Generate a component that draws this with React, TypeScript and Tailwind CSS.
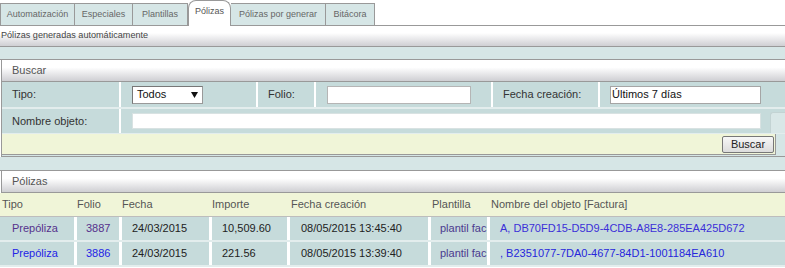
import clsx from 'clsx';

const tabs = [
  { label: 'Automatización', w: 'w-[75px]' },
  { label: 'Especiales', w: 'w-[58px]' },
  { label: 'Plantillas', w: 'w-[55px]' },
  { label: 'Pólizas', w: 'w-[43px]', active: true },
  { label: 'Pólizas por generar', w: 'w-[95px]' },
  { label: 'Bitácora', w: 'w-[49px]' },
];

const columns = [
  { title: 'Tipo', w: 'w-[77px]', head: 'pl-[2px]', cell: 'pl-[12px]' },
  { title: 'Folio', w: 'w-[45px]', head: 'pl-0', cell: 'pl-[9px]' },
  { title: 'Fecha', w: 'w-[90px]', head: 'pl-0', cell: 'pl-[10px]' },
  { title: 'Importe', w: 'w-[78px]', head: 'pl-0', cell: 'pl-[10px]' },
  { title: 'Fecha creación', w: 'w-[141px]', head: 'pl-px', cell: 'pl-[11px]' },
  { title: 'Plantilla', w: 'w-[59px]', head: 'pl-px', cell: 'pl-[9px]' },
  { title: 'Nombre del objeto [Factura]', w: 'flex-1', head: 'pl-px', cell: 'pl-[10px]' },
];

const rows = [
  {
    visited: true,
    values: ['Prepóliza', '3887', '24/03/2015', '10,509.60', '08/05/2015 13:45:40', 'plantil fac', 'A, DB70FD15-D5D9-4CDB-A8E8-285EA425D672'],
  },
  {
    visited: false,
    values: ['Prepóliza', '3886', '24/03/2015', '221.56', '08/05/2015 13:39:40', 'plantil fac', ', B2351077-7DA0-4677-84D1-1001184EA610'],
  },
];

const linkColor = (col: number, visited: boolean) => {
  if (col === 0 || col === 1) return visited ? 'text-[#55318c]' : 'text-[#2323e6]';
  if (col === 5) return 'text-[#4b3a8e]';
  if (col === 6) return visited ? 'text-[#3b2fd8]' : 'text-[#2626dc]';
  return 'text-[#222]';
};

const PanelHeader = ({ title }: { title: string }) => (
  <div className="h-[22px] flex items-center pl-[10px] border-b border-[#999] bg-linear-to-b from-white from-35% to-[#cfcfd3] text-[#555]">
    {title}
  </div>
);

export default function App() {
  return (
    <div className="w-[785px] h-[268px] overflow-hidden bg-white font-[Liberation_Sans,Arial,sans-serif] text-[11px] text-[#333]">
      {/* Tabs */}
      <div className="flex items-end h-[26px] border-b border-[#999]">
        {tabs.map((tab, i) => (
          <div
            key={tab.label}
            className={clsx(
              'flex items-center justify-center text-[9px] border-t border-r border-[#999]',
              tab.w,
              i === 0 && 'border-l',
              tab.active
                ? 'h-[26px] -mb-px bg-white rounded-t-[8px] border-l text-[#555] pb-[3px]'
                : 'h-[22px] bg-[#d6e6e6] text-[#666]'
            )}
          >
            {tab.label}
          </div>
        ))}
      </div>

      {/* Subtitle */}
      <div className="h-[21px] flex items-center pl-px border-b border-[#999] bg-linear-to-b from-white from-35% to-[#cfcfd3] text-[9.1px] text-[#444]">
        Pólizas generadas automáticamente
      </div>
      <div className="h-[13px] bg-[#d6e6e6] border-b border-[#999]" />

      {/* Buscar panel */}
      <div className="ml-px border-l border-[#999] bg-[#d6e6e6]">
        <PanelHeader title="Buscar" />

        <div className="flex h-[27px] border-b-2 border-[#e3eded] bg-[#c6dbdb]">
          <div className="w-[119px] border-r-2 border-white flex items-center pl-[10px]">Tipo:</div>
          <div className="w-[137px] border-r-2 border-white flex items-center pl-[11px]">
            <div className="w-[71px] h-[18px] bg-white border border-[#999] border-t-[#777] border-l-[#777] flex items-center justify-between pl-[4px] pr-[4px] text-[#111]">
              <span>Todos</span>
              <svg width="7" height="6" viewBox="0 0 7 6">
                <path d="M0 0h7L3.5 6z" fill="#111" />
              </svg>
            </div>
          </div>
          <div className="w-[58px] border-r-2 border-white flex items-center pl-[10px]">Folio:</div>
          <div className="w-[177px] border-r-2 border-white flex items-center pl-[11px]">
            <div className="w-[144px] h-[18px] bg-white border border-[#b5b5b5]" />
          </div>
          <div className="w-[107px] border-r-2 border-white flex items-center pl-[10px]">Fecha creación:</div>
          <div className="flex-1 flex items-center pl-[10px]">
            <div className="w-[151px] h-[18px] bg-white border border-[#a5a5a5] flex items-center pl-px text-[#111]">
              Últimos 7 días
            </div>
          </div>
        </div>

        <div className="flex h-[25px] border-b border-[#e3eded] bg-[#c6dbdb]">
          <div className="w-[119px] border-r-2 border-white flex items-center pl-[10px]">Nombre objeto:</div>
          <div className="flex-1 flex items-center pl-[11px]">
            <div className="w-[629px] h-[16px] bg-white border border-[#d8e2e2]" />
            <div className="ml-[9px] mt-[3px] self-stretch flex-1 bg-[#d9e7e7] border-l border-t border-[#c3d3d3] rounded-tl-[3px]" />
          </div>
        </div>

        <div className="flex">
          <div className="w-[774px] h-[21px] bg-[#f0f5d8] border-r border-b border-[#999] flex items-center justify-end pr-px">
            <button className="w-[52px] h-[17px] border border-[#777] rounded-[2px] bg-linear-to-b from-[#f7f7f7] to-[#dcdcdc] text-[#222] text-[11px] leading-none">
              Buscar
            </button>
          </div>
          <div className="flex-1 bg-[#d6e6e6]" />
        </div>
        <div className="h-[2px] bg-[#d6e6e6] border-b border-[#999]" />
      </div>

      <div className="h-[14px] bg-[#d6e6e6] border-b border-[#999]" />

      {/* Pólizas panel */}
      <div className="ml-px border-l border-[#999]">
        <div className="h-[22px] flex items-center pl-[10px] border-b border-[#999] bg-linear-to-b from-white from-35% to-[#cfcfd3] text-[#555]">
          Pólizas
        </div>
      </div>

      <div className="flex h-[24px] bg-[#f0f5d8] border-b border-[#bdbdbd] text-[#555]">
        {columns.map((c) => (
          <div key={c.title} className={clsx('flex items-center whitespace-nowrap', c.w, c.head)}>
            {c.title}
          </div>
        ))}
      </div>

      {rows.map((row, r) => (
        <div key={r} className="flex h-[25px] border-b-2 border-[#e3eded]">
          {row.values.map((v, i) => (
            <div
              key={i}
              className={clsx(
                'flex items-center whitespace-nowrap overflow-hidden bg-[#c6dbdb]',
                columns[i].w,
                columns[i].cell,
                i < row.values.length - 1 && 'border-r-[3px] border-white',
                linkColor(i, row.visited)
              )}
            >
              {v}
            </div>
          ))}
        </div>
      ))}
    </div>
  );
}
